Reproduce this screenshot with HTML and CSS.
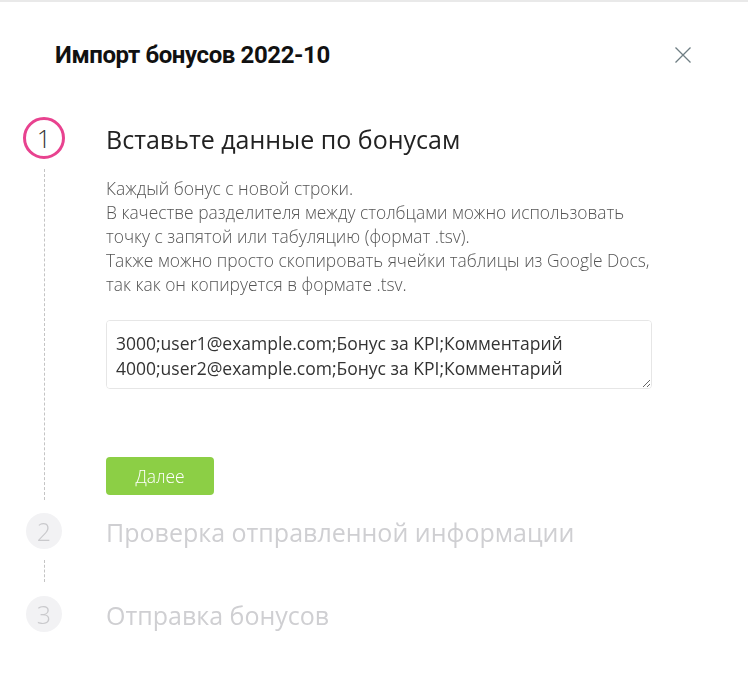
FILE: index.html
```html
<!DOCTYPE html>
<html lang="ru">
<head>
<meta charset="utf-8">
<link rel="stylesheet" href="styles.css">
</head>
<body>
<div class="modal">
  <div class="header">
    <h1 class="title">Импорт бонусов 2022-10</h1>
    <button class="close" aria-label="Закрыть">
      <svg width="18" height="18" viewBox="0 0 18 18"><path d="M1.5 1.5 L16.5 16.5 M16.5 1.5 L1.5 16.5" stroke="#6e7d83" stroke-width="1.3" fill="none"/></svg>
    </button>
  </div>
  <div class="steps">
    <div class="step active">
      <div class="marker">
        <div class="circle">1</div>
        <div class="line"></div>
      </div>
      <div class="body">
        <div class="step-title">Вставьте данные по бонусам</div>
        <p class="desc">Каждый бонус с новой строки.<br>В качестве разделителя между столбцами можно использовать<br>точку с запятой или табуляцию (формат .tsv).<br>Также можно просто скопировать ячейки таблицы из Google Docs,<br>так как он копируется в формате .tsv.</p>
        <textarea class="input">3000;user1@example.com;Бонус за KPI;Комментарий
4000;user2@example.com;Бонус за KPI;Комментарий</textarea>
        <button class="next">Далее</button>
      </div>
    </div>
    <div class="step pending">
      <div class="marker">
        <div class="circle">2</div>
        <div class="line"></div>
      </div>
      <div class="body">
        <div class="step-title">Проверка отправленной информации</div>
      </div>
    </div>
    <div class="step pending last">
      <div class="marker">
        <div class="circle">3</div>
      </div>
      <div class="body">
        <div class="step-title">Отправка бонусов</div>
      </div>
    </div>
  </div>
</div>
</body>
</html>
```
FILE: styles.css
```css
* { box-sizing: border-box; }
html, body { margin: 0; padding: 0; background: #fff; }
body { font-family: "Open Sans", "Noto Sans", sans-serif; color: #333; }
.modal { border-top: 2px solid #e9e9e9; min-height: 690px; }
.header { display: flex; justify-content: space-between; align-items: center; height: 106px; padding: 0 56px 0 55px; }
.title { margin: 0; font-family: Roboto, "Liberation Sans", sans-serif; font-weight: 700; font-size: 24px; color: #111; letter-spacing: -0.4px; }
.close { background: none; border: 0; padding: 0; width: 18px; height: 18px; cursor: pointer; display: flex; }
.steps { display: flex; flex-direction: column; padding-top: 9px; }
.step { display: grid; grid-template-columns: 88px 1fr; column-gap: 18px; }
.marker { display: flex; flex-direction: column; align-items: center; }
.circle { width: 36px; height: 36px; border-radius: 50%; background: #f2f2f4; color: #c9c9cc; display: flex; align-items: center; justify-content: center; font-size: 25px; font-weight: 300; }
.active .circle { width: 42px; height: 42px; background: #fff; border: 3px solid #e8428f; color: #333; font-size: 25px; }
.line { flex: 1; border-left: 1px dashed #c4c4c4; margin: 10px 0 13px; width: 0; }
.pending .line { margin: 11px 0 14px; min-height: 22px; }
.step-title { font-size: 25px; line-height: 42px; color: #222; }
.active .step-title { padding-top: 3px; line-height: 39px; }
.pending .step-title { line-height: 36px; color: #cfcfd2; padding-top: 1px; }
.desc { margin: 17px 0 0; font-size: 17.4px; line-height: 24px; font-weight: 300; color: #555; }
.input { display: block; width: 546px; height: 69px; margin-top: 24px; padding: 10px 9px 9px; border: 1px solid #e6e6e6; border-radius: 4px; font-family: "Open Sans", sans-serif; font-size: 17.5px; line-height: 25px; color: #333; resize: vertical; outline: none; }
.next { display: block; margin: 68px 0 18px; width: 108px; height: 38px; border: 0; border-radius: 4px; background: #8ccf45; color: #fff; font-family: "Open Sans", sans-serif; font-size: 17.4px; font-weight: 300; cursor: pointer; }
```
